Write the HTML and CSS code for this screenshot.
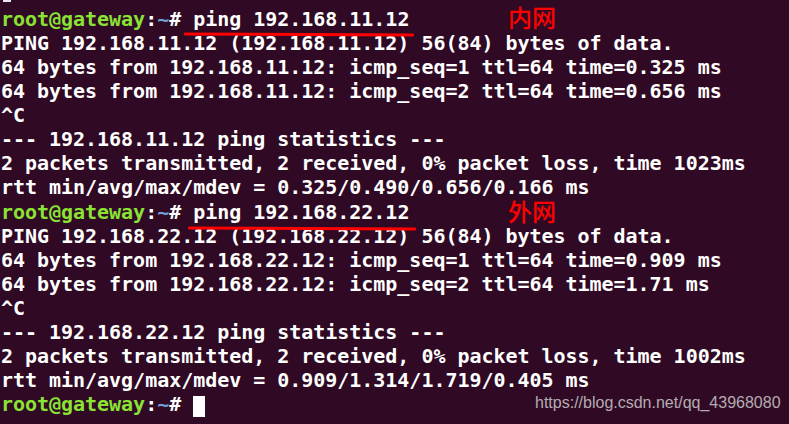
FILE: index.html
```html
<!DOCTYPE html>
<html>
<head>
<meta charset="utf-8">
<link rel="stylesheet" href="styles.css">
</head>
<body>
<div class="term">
<div class="topmark"></div>
<pre class="out"><span class="u">root@gateway</span>:<span class="b">~</span># ping 192.168.11.12
PING 192.168.11.12 (192.168.11.12) 56(84) bytes of data.
64 bytes from 192.168.11.12: icmp_seq=1 ttl=64 time=0.325 ms
64 bytes from 192.168.11.12: icmp_seq=2 ttl=64 time=0.656 ms
^C
--- 192.168.11.12 ping statistics ---
2 packets transmitted, 2 received, 0% packet loss, time 1023ms
rtt min/avg/max/mdev = 0.325/0.490/0.656/0.166 ms
<span class="u">root@gateway</span>:<span class="b">~</span># ping 192.168.22.12
PING 192.168.22.12 (192.168.22.12) 56(84) bytes of data.
64 bytes from 192.168.22.12: icmp_seq=1 ttl=64 time=0.909 ms
64 bytes from 192.168.22.12: icmp_seq=2 ttl=64 time=1.71 ms
^C
--- 192.168.22.12 ping statistics ---
2 packets transmitted, 2 received, 0% packet loss, time 1002ms
rtt min/avg/max/mdev = 0.909/1.314/1.719/0.405 ms
<span class="u">root@gateway</span>:<span class="b">~</span># <span class="cursor"> </span></pre>
<div class="mark line1"></div>
<div class="mark line2"></div>
<div class="note note1">内网</div>
<div class="note note2">外网</div>
<div class="wm">https://blog.csdn.net/qq_43968080</div>
</div>
</body>
</html>
```
FILE: styles.css
```css
html, body {
  margin: 0;
  padding: 0;
  background: #300a24;
}
.term {
  position: relative;
  width: 789px;
  height: 424px;
  overflow: hidden;
  background: #300a24;
}
.out {
  margin: 0;
  padding: 7px 0 0 1px;
  font-family: "DejaVu Sans Mono", monospace;
  font-weight: bold;
  font-size: 20px;
  letter-spacing: -0.03px;
  line-height: 24.06px;
  color: #ffffff;
}
.u { color: #8ae234; }
.b { color: #729fcf; }
.cursor {
  display: inline-block;
  width: 12px;
  height: 21px;
  background: #ffffff;
  vertical-align: -4px;
}
.topmark {
  position: absolute;
  left: 3px;
  top: 0;
  width: 8px;
  height: 2px;
  background: #e8e8f0;
}
.mark {
  position: absolute;
  height: 3px;
  background: #ff0000;
  border-radius: 1px;
}
.line1 { left: 184px; top: 33px; width: 230px; transform: rotate(0.2deg); }
.line2 { left: 188px; top: 227px; width: 228px; transform: rotate(0.2deg); }
.note {
  position: absolute;
  left: 508px;
  font-family: "Noto Sans CJK SC", sans-serif;
  font-weight: 500;
  font-size: 24px;
  line-height: 24px;
  color: #ff0000;
}
.note1 { top: 5px; }
.note2 { top: 199px; }
.wm {
  position: absolute;
  left: 535px;
  top: 394px;
  font-family: "Liberation Sans", Arial, sans-serif;
  font-size: 16px;
  color: #b4acb2;
}
```
